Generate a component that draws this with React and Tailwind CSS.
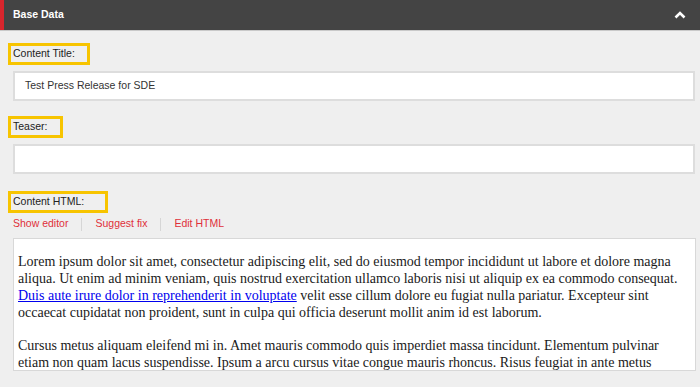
import React from 'react'

// Base Data panel: labelled fields with annotation highlights
function Label({ children, width }) {
  return (
    <div
      className="ml-[8px] h-[22px] border-[3px] border-[#f7c400] flex items-center pl-[2px] text-[10.5px] text-[#222]"
      style={{ width }}
    >
      {children}
    </div>
  )
}

function Sep() {
  return <span className="w-px h-[13px] bg-[#d6d6d6] mx-[13px]" />
}

export default function App() {
  return (
    <div className="w-[700px] h-[387px] bg-[#efefef] overflow-hidden font-['Liberation_Sans',Arial,sans-serif]">
      {/* Header */}
      <div className="h-[31px] flex items-center bg-[#444444] border-b border-[#c9c9c9]">
        <div className="w-[4px] h-full bg-[#d8262d]" />
        <span className="ml-[9px] text-[10.5px] font-bold text-white">Base Data</span>
        <svg className="ml-auto mr-[14px]" width="12" height="8" viewBox="0 0 12 8">
          <polyline points="1.5,6.5 6,2 10.5,6.5" fill="none" stroke="white" strokeWidth="2.6" />
        </svg>
      </div>

      <div className="pt-[12px]">
        <Label width={82}>Content Title:</Label>
        <div className="mt-[6px] ml-[13px] mr-[5px] h-[30px] bg-white border-2 border-[#dddddd] flex items-center pl-[10px] text-[10.5px] text-[#333]">
          Test Press Release for SDE
        </div>

        <div className="mt-[15px]">
          <Label width={55}>Teaser:</Label>
        </div>
        <div className="mt-[6px] ml-[13px] mr-[5px] h-[30px] bg-white border-2 border-[#dddddd]" />

        <div className="mt-[17px]">
          <Label width={100}>Content HTML:</Label>
        </div>
        <div className="mt-[4px] ml-[13px] h-[14px] flex items-center text-[10.5px] text-[#e0303a]">
          <span>Show editor</span>
          <Sep />
          <span>Suggest fix</span>
          <Sep />
          <span>Edit HTML</span>
        </div>

        <div className="mt-[7px] ml-[13px] mr-[4px] h-[133px] overflow-hidden bg-white border border-[#d8d8d8] pl-[4px] pr-[4px] pt-[14px] font-['Liberation_Serif','Times_New_Roman',serif] text-[14px] leading-[17px] text-[#1a1a1a]">
          <p>
            Lorem ipsum dolor sit amet, consectetur adipiscing elit, sed do eiusmod tempor incididunt ut labore et dolore magna
            aliqua. Ut enim ad minim veniam, quis nostrud exercitation ullamco laboris nisi ut aliquip ex ea commodo consequat.{' '}
            <a href="#" className="text-[#0000ee] underline">Duis aute irure dolor in reprehenderit in voluptate</a> velit esse cillum dolore eu fugiat nulla pariatur. Excepteur sint
            occaecat cupidatat non proident, sunt in culpa qui officia deserunt mollit anim id est laborum.
          </p>
          <p className="mt-[16px]">
            Cursus metus aliquam eleifend mi in. Amet mauris commodo quis imperdiet massa tincidunt. Elementum pulvinar
            etiam non quam lacus suspendisse. Ipsum a arcu cursus vitae congue mauris rhoncus. Risus feugiat in ante metus
          </p>
        </div>
      </div>
    </div>
  )
}
